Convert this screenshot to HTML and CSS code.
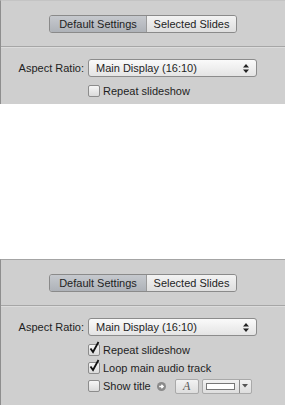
FILE: index.html
```html
<!DOCTYPE html>
<html>

<head>
    <title>Slideshow settings</title>
    <meta name="viewport" content="width=device-width, initial-scale=1.0">
    <link rel="stylesheet" href="styles.css">
</head>

<body>
    <section class="panel">
        <div class="tabs">
            <div class="seg">
                <span class="seg-item on">Default Settings</span>
                <span class="seg-item">Selected Slides</span>
            </div>
        </div>
        <div class="form">
            <label class="lbl">Aspect Ratio:</label>
            <div class="popup">Main Display (16:10)
                <svg class="updown" width="6" height="9" viewBox="0 0 6 9"><path d="M3 0L6 3.5H0Z M3 9L6 5.5H0Z" fill="#222"/></svg>
            </div>
            <div class="row"><span class="box"></span>Repeat slideshow</div>
        </div>
    </section>

    <div class="gap"></div>

    <section class="panel">
        <div class="tabs">
            <div class="seg">
                <span class="seg-item on">Default Settings</span>
                <span class="seg-item">Selected Slides</span>
            </div>
        </div>
        <div class="form">
            <label class="lbl">Aspect Ratio:</label>
            <div class="popup">Main Display (16:10)
                <svg class="updown" width="6" height="9" viewBox="0 0 6 9"><path d="M3 0L6 3.5H0Z M3 9L6 5.5H0Z" fill="#222"/></svg>
            </div>
            <div class="row"><span class="box"><svg class="tick" width="12" height="13" viewBox="0 0 12 13"><path d="M2.5 7.5L5 11L10.5 1" stroke="#111" stroke-width="1.8" fill="none"/></svg></span>Repeat slideshow</div>
            <div class="row"><span class="box"><svg class="tick" width="12" height="13" viewBox="0 0 12 13"><path d="M2.5 7.5L5 11L10.5 1" stroke="#111" stroke-width="1.8" fill="none"/></svg></span>Loop main audio track</div>
            <div class="row"><span class="box"></span>Show title
                <svg class="go" width="9" height="9" viewBox="0 0 9 9"><circle cx="4.5" cy="4.5" r="4.5" fill="#8a8a8a"/><path d="M2.2 4.5H6M4.4 2.7L6.2 4.5L4.4 6.3" stroke="#fff" stroke-width="1.3" fill="none"/></svg>
                <span class="fontbtn">A</span>
                <span class="well"><span class="swatch"></span><span class="drop"><svg width="6" height="4" viewBox="0 0 6 4"><path d="M0 0H6L3 3.5Z" fill="#555"/></svg></span></span>
            </div>
        </div>
    </section>
</body>

</html>
```

FILE: styles.css
```css
* { box-sizing: border-box; margin: 0; padding: 0; }
body { background: #fff; font-family: "Liberation Sans", Arial, sans-serif; font-size: 11px; color: #1e1e1e; width: 285px; }
.panel { background: #cfcfcf; border-left: 1px solid #8e8e8e; border-top: 1px solid #a4a4a4; }
.panel:first-child { height: 104px; border-top-color: #c4c4c4; }
.panel:last-child { height: 146px; }
.gap { height: 155px; }
.tabs { height: 46px; padding-top: 14px; border-bottom: 1px solid #a6a6a6; box-shadow: 0 1px #dcdcdc; display: flex; justify-content: center; }
.seg { display: flex; height: 18px; border: 1px solid #8a8a8a; border-radius: 3px; overflow: hidden; width: 188px; }
.seg-item { display: flex; align-items: center; justify-content: center; background: linear-gradient(#f3f3f3, #dedede); }
.seg-item:first-child { width: 97px; border-right: 1px solid #9a9a9a; }
.seg-item:last-child { flex: 1; }
.seg-item.on { background: linear-gradient(#c6c9ce, #aeb2b8); }
.form { display: grid; grid-template-columns: 87px 169px; padding-top: 12px; }
.lbl { text-align: right; padding-right: 4px; line-height: 18px; }
.popup { height: 18px; border: 1px solid #8c8c8c; border-radius: 3px; background: linear-gradient(#fafafa, #e4e4e4); display: flex; align-items: center; padding-left: 7px; position: relative; }
.updown { position: absolute; right: 7px; top: 4px; }
.row { grid-column: 2; height: 18px; display: flex; align-items: center; white-space: nowrap; }
.row > * { flex-shrink: 0; }
.row:nth-child(3) { margin-top: 5px; }
.box { width: 12px; height: 12px; border: 1px solid #8c8c8c; border-radius: 2px; background: linear-gradient(#f6f6f6, #dadada); margin-right: 3px; position: relative; }
.tick { position: absolute; left: -1px; top: -4px; }
.go { margin-left: 6px; }
.fontbtn { width: 24px; height: 15px; margin-left: 9px; border: 1px solid #a9a9a9; border-radius: 2px; background: linear-gradient(#f2f2f2, #dddddd); display: flex; align-items: center; justify-content: center; font-family: "Liberation Serif", serif; font-style: italic; font-size: 12px; color: #555; }
.well { width: 50px; height: 15px; margin-left: 3px; border: 1px solid #a9a9a9; border-radius: 2px; background: linear-gradient(#f2f2f2, #dddddd); display: flex; align-items: center; }
.swatch { width: 29px; height: 7px; margin-left: 3px; background: #fff; border: 1px solid #777; }
.drop { margin-left: 4px; height: 13px; flex: 1; border-left: 1px solid #8a8a8a; display: flex; align-items: center; justify-content: center; }
```
